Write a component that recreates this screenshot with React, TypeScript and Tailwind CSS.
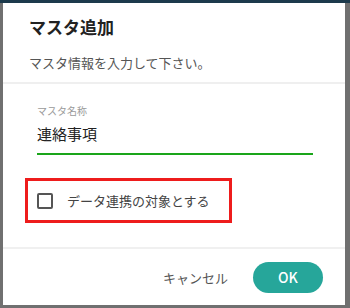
export default function App() {
  return (
    <div
      className="relative h-[308px] w-[350px] overflow-hidden bg-[#707070] pl-[3px] pt-[3px]"
      style={{ fontFamily: '"Noto Sans CJK JP", "Noto Sans", sans-serif' }}
    >
      <div className="absolute left-0 top-0 h-[3px] w-full bg-[#1c3a4c]" />
      <div className="flex h-[302px] w-[342px] flex-col bg-white">
        <div className="px-[26px] pb-[9px] pt-3">
          <h2 className="text-[17px] font-bold leading-6 text-[#222]">マスタ追加</h2>
          <p className="mt-[14px] text-[13px] leading-5 text-[#555]">マスタ情報を入力して下さい。</p>
        </div>
        <div className="h-[2px] bg-[#efefef]" />

        <div className="pl-[34px] pr-[32px] pt-[20px]">
          <label className="block text-[10px] leading-[14px] text-[#9a9a9a]">マスタ名称</label>
          <div className="mt-[6px] border-b-2 border-[#1aa51a] pb-[9px] text-[15px] leading-5 text-[#222]">
            連絡事項
          </div>
        </div>

        <div className="ml-[22px] mt-[23px] flex h-[45px] w-[207px] items-center border-[3px] border-[#ee1c1c] pl-[9px]">
          <span className="h-[16px] w-[16px] rounded-[2px] border-2 border-[#555]" />
          <span className="ml-[14px] text-[13px] leading-5 text-[#444]">データ連携の対象とする</span>
        </div>

        <div className="mt-[24px] h-[2px] bg-[#f0f0f0]" />

        <div className="flex items-center justify-end gap-[25px] pr-[22px] pt-[13px]">
          <button className="text-[13px] leading-5 text-[#555]">キャンセル</button>
          <button className="h-[31px] w-[70px] rounded-full bg-[#26a69a] text-[14px] font-medium text-white">
            OK
          </button>
        </div>
      </div>
    </div>
  );
}
